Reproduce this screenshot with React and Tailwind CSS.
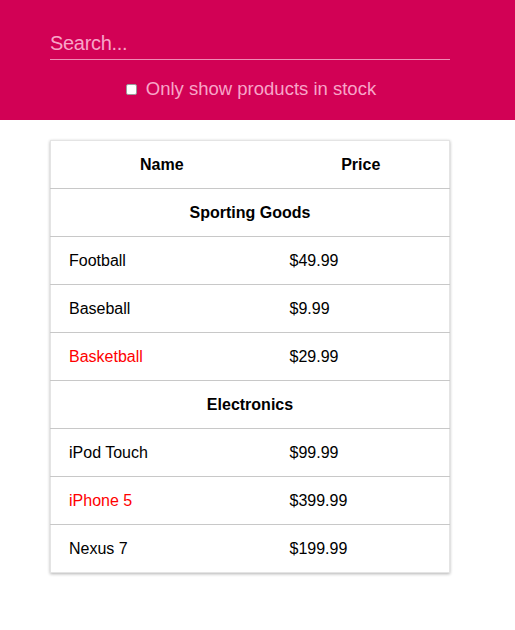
import React, { useState } from "react";

const PRODUCTS = [
  { category: "Sporting Goods", price: "$49.99", stocked: true, name: "Football" },
  { category: "Sporting Goods", price: "$9.99", stocked: true, name: "Baseball" },
  { category: "Sporting Goods", price: "$29.99", stocked: false, name: "Basketball" },
  { category: "Electronics", price: "$99.99", stocked: true, name: "iPod Touch" },
  { category: "Electronics", price: "$399.99", stocked: false, name: "iPhone 5" },
  { category: "Electronics", price: "$199.99", stocked: true, name: "Nexus 7" },
];

const App = () => {
  const [query, setQuery] = useState("");
  const [inStock, setInStock] = useState(false);

  const rows = [];
  let lastCategory = null;
  PRODUCTS.forEach((p) => {
    if (inStock && !p.stocked) return;
    if (!p.name.toLowerCase().includes(query.toLowerCase())) return;
    if (p.category !== lastCategory) {
      rows.push(
        <tr key={p.category} className="h-12 border-t border-[#c8c8c8]">
          <th colSpan={2} className="text-center font-bold">{p.category}</th>
        </tr>
      );
      lastCategory = p.category;
    }
    rows.push(
      <tr key={p.name} className="h-12 border-t border-[#c8c8c8]">
        <td className={`pl-[18px] ${p.stocked ? "text-black" : "text-[#ff0000]"}`}>{p.name}</td>
        <td className="pl-[17px]">{p.price}</td>
      </tr>
    );
  });

  return (
    <div className="min-h-screen bg-white font-['Liberation_Sans',Arial,sans-serif] text-black">
      {/* Search bar */}
      <div className="bg-[#d20155] h-[120px] pt-[28px]">
        <div className="w-[400px] ml-[50px]">
          <input
            type="text"
            placeholder="Search..."
            value={query}
            onChange={(e) => setQuery(e.target.value)}
            className="w-full h-[32px] bg-transparent border-b border-[#f08cb5] text-[20px] text-[#f8a5c8] placeholder:text-[#f8a5c8] outline-none tracking-[-0.3px]"
          />
          <label className="flex items-center justify-center gap-[9px] mt-[15px] text-[18.5px] text-[#f8a5c8]">
            <input
              type="checkbox"
              checked={inStock}
              onChange={(e) => setInStock(e.target.checked)}
              className="w-[11px] h-[11px] mt-[2px] ml-[2px] appearance-none bg-white rounded-[2px] border border-[#9a9a9a]"
            />
            Only show products in stock
          </label>
        </div>
      </div>

      {/* Product table */}
      <div className="w-[400px] ml-[50px] pt-[20px]">
        <table className="w-full border-collapse text-[16px] shadow-[0_1px_3px_rgba(0,0,0,0.3)] border border-[#e4e4e4]">
          <thead>
            <tr className="h-12">
              <th className="w-[222px] text-center font-bold">Name</th>
              <th className="text-center font-bold">Price</th>
            </tr>
          </thead>
          <tbody>{rows}</tbody>
        </table>
      </div>
    </div>
  );
};

export default App;
